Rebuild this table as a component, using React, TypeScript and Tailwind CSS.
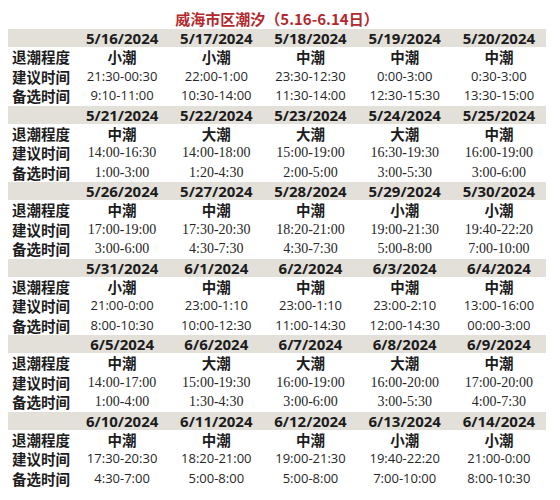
const SANS = "font-['Open_Sans','Noto_Sans_CJK_SC',sans-serif]"
const CJK = "font-['Noto_Sans_CJK_SC',sans-serif]"

type Block = {
  dates: string[]
  levels: string[]
  main: string[]
  alt: string[]
  serif?: boolean
}

const blocks: Block[] = [
  {
    dates: ['5/16/2024', '5/17/2024', '5/18/2024', '5/19/2024', '5/20/2024'],
    levels: ['小潮', '小潮', '中潮', '中潮', '中潮'],
    main: ['21:30-00:30', '22:00-1:00', '23:30-12:30', '0:00-3:00', '0:30-3:00'],
    alt: ['9:10-11:00', '10:30-14:00', '11:30-14:00', '12:30-15:30', '13:30-15:00'],
  },
  {
    dates: ['5/21/2024', '5/22/2024', '5/23/2024', '5/24/2024', '5/25/2024'],
    levels: ['中潮', '大潮', '大潮', '大潮', '中潮'],
    main: ['14:00-16:30', '14:00-18:00', '15:00-19:00', '16:30-19:30', '16:00-19:00'],
    alt: ['1:00-3:00', '1:20-4:30', '2:00-5:00', '3:00-5:30', '3:00-6:00'],
    serif: true,
  },
  {
    dates: ['5/26/2024', '5/27/2024', '5/28/2024', '5/29/2024', '5/30/2024'],
    levels: ['中潮', '中潮', '中潮', '小潮', '小潮'],
    main: ['17:00-19:00', '17:30-20:30', '18:20-21:00', '19:00-21:30', '19:40-22:20'],
    alt: ['3:00-6:00', '4:30-7:30', '4:30-7:30', '5:00-8:00', '7:00-10:00'],
    serif: true,
  },
  {
    dates: ['5/31/2024', '6/1/2024', '6/2/2024', '6/3/2024', '6/4/2024'],
    levels: ['小潮', '中潮', '中潮', '中潮', '中潮'],
    main: ['21:00-0:00', '23:00-1:10', '23:00-1:10', '23:00-2:10', '13:00-16:00'],
    alt: ['8:00-10:30', '10:00-12:30', '11:00-14:30', '12:00-14:30', '00:00-3:00'],
  },
  {
    dates: ['6/5/2024', '6/6/2024', '6/7/2024', '6/8/2024', '6/9/2024'],
    levels: ['中潮', '大潮', '大潮', '大潮', '中潮'],
    main: ['14:00-17:00', '15:00-19:30', '16:00-19:00', '16:00-20:00', '17:00-20:00'],
    alt: ['1:00-4:00', '1:30-4:30', '3:00-6:00', '3:00-5:30', '4:00-7:30'],
    serif: true,
  },
  {
    dates: ['6/10/2024', '6/11/2024', '6/12/2024', '6/13/2024', '6/14/2024'],
    levels: ['中潮', '中潮', '中潮', '小潮', '小潮'],
    main: ['17:30-20:30', '18:20-21:00', '19:00-21:30', '19:40-22:20', '21:00-0:00'],
    alt: ['4:30-7:00', '5:00-8:00', '5:00-8:00', '7:00-10:00', '8:00-10:30'],
  },
]

function TideBlock({ block }: { block: Block }) {
  const timeFont = block.serif
    ? "font-['Liberation_Serif',serif] text-[14px]"
    : "font-['Open_Sans',sans-serif] text-[13px]"

  return (
    <div className="grid grid-cols-[67px_repeat(5,1fr)]">
      {/* date header bar */}
      <div className="h-[18px] bg-[#e3e0da]" />
      {block.dates.map((d) => (
        <div
          key={d}
          className={`h-[18px] bg-[#e3e0da] text-center text-[15px] font-bold leading-[18px] text-[#1c1c1c] ${SANS}`}
        >
          {d}
        </div>
      ))}

      {/* 退潮程度 */}
      <div className={`h-[19.5px] pl-1 text-[14.5px] font-bold leading-[19.5px] text-[#1c1c1c] ${CJK}`}>
        退潮程度
      </div>
      {block.levels.map((l, i) => (
        <div
          key={i}
          className={`h-[19.5px] text-center text-[14.5px] font-bold leading-[19.5px] text-[#1c1c1c] ${CJK}`}
        >
          {l}
        </div>
      ))}

      {/* 建议时间 */}
      <div className={`h-[19.5px] pl-1 text-[14.5px] font-bold leading-[19.5px] text-[#1c1c1c] ${CJK}`}>
        建议时间
      </div>
      {block.main.map((t, i) => (
        <div key={i} className={`h-[19.5px] text-center leading-[19.5px] text-[#262626] ${timeFont}`}>
          {t}
        </div>
      ))}

      {/* 备选时间 */}
      <div className={`h-[19.5px] pl-1 text-[14.5px] font-bold leading-[19.5px] text-[#1c1c1c] ${CJK}`}>
        备选时间
      </div>
      {block.alt.map((t, i) => (
        <div key={i} className={`h-[19.5px] text-center leading-[19.5px] text-[#262626] ${timeFont}`}>
          {t}
        </div>
      ))}
    </div>
  )
}

export default function App() {
  return (
    <div className="h-[500px] w-[560px] bg-white pt-[8px]">
      <div className="ml-[8px] w-[538px]">
        <h1 className={`h-[21px] text-center text-[15px] font-bold leading-[21px] text-[#b3282d] ${CJK}`}>
          威海市区潮汐（5.16-6.14日）
        </h1>
        {blocks.map((b) => (
          <TideBlock key={b.dates[0]} block={b} />
        ))}
      </div>
    </div>
  )
}
